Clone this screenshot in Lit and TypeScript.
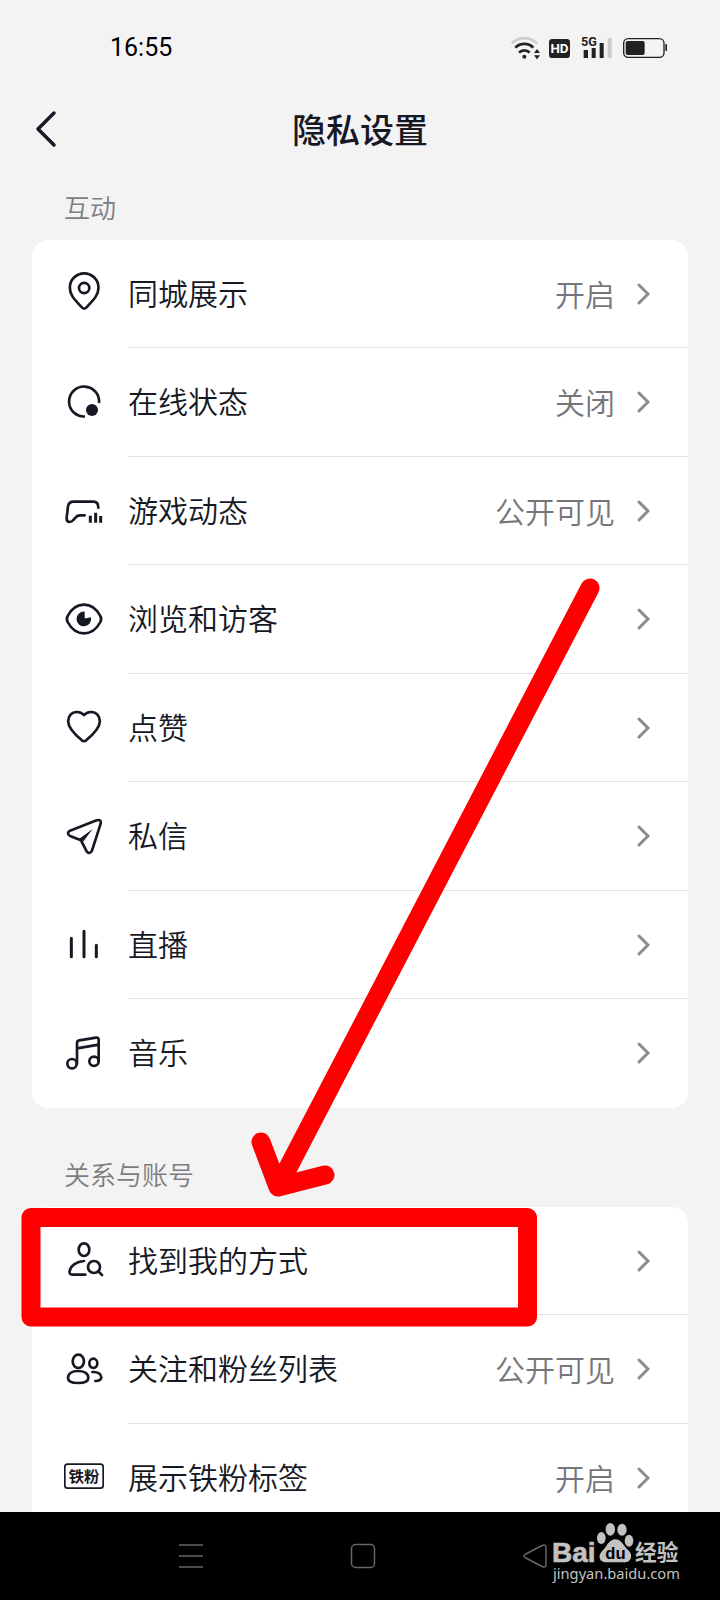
import { LitElement, html, svg, css, nothing } from "lit";
import type { SVGTemplateResult } from "lit";
import { customElement, property } from "lit/decorators.js";

interface Setting {
  icon: string;
  label: string;
  value?: string;
}

interface Group {
  title: string;
  items: Setting[];
}

const GROUPS: Group[] = [
  {
    title: "互动",
    items: [
      { icon: "pin", label: "同城展示", value: "开启" },
      { icon: "online", label: "在线状态", value: "关闭" },
      { icon: "game", label: "游戏动态", value: "公开可见" },
      { icon: "eye", label: "浏览和访客" },
      { icon: "heart", label: "点赞" },
      { icon: "plane", label: "私信" },
      { icon: "live", label: "直播" },
      { icon: "music", label: "音乐" },
    ],
  },
  {
    title: "关系与账号",
    items: [
      { icon: "find", label: "找到我的方式" },
      { icon: "friends", label: "关注和粉丝列表", value: "公开可见" },
      { icon: "badge", label: "展示铁粉标签", value: "开启" },
    ],
  },
];

// Icons share a 132-unit grid, three units to one pixel.
const ICONS: Record<string, SVGTemplateResult> = {
  pin: svg`
    <path d="M23.500 47a43 43 0 0 1 86 0c0 26-21 42-37 60q-6 6-12 0c-16-18-37-34-37-60z"/>
    <circle cx="66.500" cy="48" r="15.500"/>`,
  online: svg`
    <path stroke-linecap="butt" d="M111 66A45 45 0 1 0 69 106.500"/>
    <circle class="solid" cx="90" cy="87" r="18"/>`,
  game: svg`
    <path d="M109 56C109 44 105 38 94 38H35Q20 38 18 52L14 86Q13 98 23 99Q29 99 34 93L41 85Q46 79 54 79H68"/>
    <path class="bar" d="M85 80V101M101 71V101M116 81V101"/>`,
  eye: svg`
    <path d="M17 54C28 33 46 20 66 20s38 13 49 34q5 9 0 18C104 93 86 106 66 106S28 93 17 72q-5-9 0-18z"/>
    <path class="solid" d="M68 41v16q0 5 5 4l14-3a22 22 0 1 1-19-17z"/>`,
  heart: svg`
    <path d="M66 27C59 20 52 18 45 18 29 18 18.500 30 18.500 46c0 20 19 39 41 57q6.500 5 13 0c22-18 41-37 41-57C113.500 30 103 18 87 18c-7 0-14 2-21 9z"/>`,
  plane: svg`
    <path d="M24 47L104 16Q119 12 116 26L90 107Q83 120 74 109L57 76L24 63Q12 55 24 47z"/>
    <path class="solid" d="M52 71L92 42L62 82z"/>`,
  live: svg`<path class="bar round" d="M28 46V101M66 25V101M103 67V101"/>`,
  music: svg`
    <circle cx="30" cy="95" r="14"/>
    <circle cx="96" cy="88" r="14"/>
    <path d="M45 95V33Q45 26 52 25L102 17Q110 16 110 24V88M45 49L110 38"/>`,
  find: svg`
    <ellipse cx="66" cy="32" rx="16" ry="19"/>
    <path d="M66 66C44 68 26 79 23 96Q21 107 31 107H70"/>
    <circle cx="96" cy="84" r="18"/>
    <path d="M109 97L120 108"/>`,
  friends: svg`
    <ellipse cx="49" cy="40" rx="17" ry="20"/>
    <path d="M18 90C18 76 31 69 48 69s31 7 31 21c0 11-12 15-31 15s-30-4-30-15z"/>
    <ellipse cx="94" cy="46" rx="12" ry="14"/>
    <path d="M91 72C108 71 118 78 118 88Q118 99 100 99"/>`,
  badge: svg`
    <rect x="8.500" y="24.500" width="115" height="72" rx="8" stroke-width="5"/>
    <text x="66" y="78" text-anchor="middle">铁粉</text>`,
};

const FONT = css`"Noto Sans CJK SC", sans-serif`;

@customElement("settings-row")
export class SettingsRow extends LitElement {
  @property() icon = "";
  @property() label = "";
  @property() value?: string;

  static styles = css`
    :host {
      display: block;
    }
    .row {
      display: flex;
      gap: 22px;
      align-items: center;
      box-sizing: border-box;
      width: 100%;
      height: 100%;
      padding: 0 0 0 30px;
      border: 0;
      background: none;
      color: #161823;
      font: 350 30px/44px ${FONT};
      text-align: left;
      cursor: pointer;
    }
    .icon {
      flex: none;
      width: 44px;
      height: 44px;
      fill: none;
      stroke: #161823;
      stroke-width: 8;
      stroke-linejoin: round;
      stroke-linecap: round;
    }
    .icon .solid {
      fill: #161823;
      stroke: none;
    }
    .icon .bar {
      stroke-width: 9;
      stroke-linecap: butt;
    }
    .icon .round {
      stroke-linecap: round;
    }
    .icon text {
      fill: #161823;
      stroke: none;
      font: 700 46px ${FONT};
    }
    .body {
      display: flex;
      flex: 1;
      align-self: stretch;
      align-items: center;
      padding-right: 38px;
      border-bottom: 1px solid #e2e2e3;
    }
    :host([last]) .body {
      border-bottom-color: transparent;
    }
    .label {
      flex: 1;
      padding-bottom: 4px;
    }
    .value {
      padding-bottom: 2px;
      color: #75767b;
    }
    .chevron {
      width: 14px;
      height: 24px;
      margin-left: 21px;
      fill: none;
      stroke: #8a8b91;
      stroke-width: 3;
      stroke-linecap: round;
    }
  `;

  render() {
    return html`
      <button class="row" type="button">
        <svg class="icon" viewBox="0 0 132 132" aria-hidden="true">${ICONS[this.icon]}</svg>
        <span class="body">
          <span class="label">${this.label}</span>
          ${this.value ? html`<span class="value">${this.value}</span>` : nothing}
          <svg class="chevron" viewBox="0 0 14 24" aria-hidden="true">
            <path d="M3 3L12 12L3 21" />
          </svg>
        </span>
      </button>
    `;
  }
}

@customElement("app-root")
export class AppRoot extends LitElement {
  static styles = css`
    :host {
      display: flex;
      flex-direction: column;
      height: 100vh;
      background: #f3f3f3;
      color: #161823;
      font-family: ${FONT};
    }
    .status {
      display: flex;
      flex: none;
      align-items: center;
      justify-content: space-between;
      box-sizing: border-box;
      height: 96px;
      padding: 0 52px 0 110px;
    }
    .time {
      color: #000;
      font: 400 25px/32px Roboto, sans-serif;
    }
    .indicators {
      width: 160px;
      height: 30px;
      fill: #222;
    }
    .indicators text {
      font-family: "Liberation Sans Narrow", Roboto, sans-serif;
      font-weight: 700;
    }
    .indicators .hd {
      fill: #fff;
    }
    .indicators .line {
      fill: none;
      stroke: #222;
    }
    .indicators .dim {
      fill: #cbcbcb;
    }
    .indicators .dim-line {
      fill: none;
      stroke: #cbcbcb;
    }
    .header {
      display: grid;
      flex: none;
      grid-template-columns: 56px 1fr 56px;
      align-items: center;
      box-sizing: border-box;
      height: 68px;
      padding: 0 24px 2px;
    }
    .back {
      display: flex;
      padding: 8px;
      border: 0;
      background: none;
      cursor: pointer;
    }
    .back svg {
      width: 28px;
      height: 40px;
      fill: none;
      stroke: #161823;
      stroke-width: 3.500;
      stroke-linecap: round;
      stroke-linejoin: round;
    }
    .title {
      margin: 0;
      font-size: 34px;
      font-weight: 500;
      line-height: 48px;
      text-align: center;
    }
    .scroller {
      position: relative;
      flex: 1;
      min-height: 0;
      overflow-y: auto;
      scrollbar-width: none;
    }
    .groups {
      display: flex;
      flex-direction: column;
      gap: 48px;
      padding: 25px 32px 48px;
    }
    .group-title {
      margin: 0 0 15px;
      padding-left: 32px;
      color: #7d7e82;
      font-size: 26px;
      font-weight: 350;
      line-height: 36px;
    }
    .card {
      margin: 0;
      padding: 0;
      border-radius: 16px;
      background: #fff;
      list-style: none;
    }
    .item {
      display: grid;
      height: 108px;
    }
    .item:nth-child(even) {
      height: 109px;
    }
    .marks {
      position: absolute;
      top: 0;
      left: 0;
      width: 720px;
      height: 1348px;
      fill: none;
      stroke: #fe0000;
      stroke-width: 19;
      stroke-linecap: round;
      stroke-linejoin: round;
      pointer-events: none;
    }
    .nav {
      position: relative;
      display: flex;
      flex: none;
      justify-content: center;
      height: 88px;
      padding-left: 5px;
      background: #000;
    }
    .key {
      display: flex;
      align-items: center;
      justify-content: center;
      width: 172px;
      padding: 0;
      border: 0;
      background: none;
      cursor: pointer;
    }
    .key svg {
      width: 26px;
      height: 26px;
      fill: none;
      stroke: #666;
      stroke-width: 1.500;
      stroke-linejoin: round;
    }
    .watermark {
      position: absolute;
      top: 8px;
      right: 37px;
      width: 133px;
      height: 67px;
      fill: #c2c2c2;
      pointer-events: none;
    }
    .brand {
      stroke: #c2c2c2;
      stroke-width: 2;
      font: 700 84px "Liberation Sans", sans-serif;
    }
    .brand-du {
      fill: #000;
      font: 700 50px "Liberation Sans", sans-serif;
    }
    .brand-cn {
      font: 700 65px ${FONT};
    }
    .brand-url {
      font: 400 44px "Noto Sans", sans-serif;
    }
  `;

  render() {
    return html`
      <div class="status">
        <span class="time">16:55</span>
        <svg class="indicators" viewBox="0 0 480 90" aria-hidden="true">
          <path class="dim-line" stroke-width="7" d="M11 31A55 55 0 0 1 87 31" />
          <path class="line" stroke-width="8" d="M22 44A38 38 0 0 1 76 44M33 59A22 22 0 0 1 65 59" />
          <circle cx="49" cy="71" r="6" />
          <path d="M87 48l9 12H78zM87 79l9-12H78z" />
          <rect x="123" y="18" width="63" height="57" rx="10" />
          <text class="hd" x="154.500" y="61" font-size="40" text-anchor="middle">HD</text>
          <text x="219" y="39" font-size="38">5G</text>
          <path d="M227 51h13v24h-13zM251 45h12v30h-12zM275 30h12v45h-12z" />
          <path class="dim" d="M299 15h12v60h-12z" />
          <rect class="line" stroke-width="4" x="347" y="17" width="121" height="56" rx="14" />
          <rect x="353" y="24" width="57" height="42" rx="6" />
          <rect x="472" y="33" width="5" height="21" rx="2" />
        </svg>
      </div>
      <header class="header">
        <button class="back" type="button" aria-label="返回">
          <svg viewBox="0 0 28 40"><path d="M22 4L6 20L22 36" /></svg>
        </button>
        <h1 class="title">隐私设置</h1>
      </header>
      <main class="scroller">
        <div class="groups">
          ${GROUPS.map(
            (group) => html`
              <section>
                <h2 class="group-title">${group.title}</h2>
                <ul class="card">
                  ${group.items.map(
                    (item, i) => html`
                      <li class="item">
                        <settings-row
                          .icon=${item.icon}
                          .label=${item.label}
                          .value=${item.value}
                          ?last=${i === group.items.length - 1}
                        ></settings-row>
                      </li>
                    `
                  )}
                </ul>
              </section>
            `
          )}
        </div>
        <svg class="marks" viewBox="0 164 720 1348" aria-hidden="true">
          <path d="M590 588L278 1187M261 1142L278 1187L325 1175" />
          <rect x="31" y="1217.500" width="496.500" height="99.500" />
        </svg>
      </main>
      <nav class="nav">
        <button class="key" type="button" aria-label="菜单">
          <svg viewBox="0 0 26 26"><path d="M1 2H25M1 13H25M1 24H25" /></svg>
        </button>
        <button class="key" type="button" aria-label="主页">
          <svg viewBox="0 0 26 26"><rect x="1.500" y="1.500" width="23" height="23" rx="4" /></svg>
        </button>
        <button class="key" type="button" aria-label="返回上一页">
          <svg viewBox="0 0 26 26"><path d="M3 11.500L20 2.500Q24 1 24 4V22Q24 25 20 23.500L3 14.500Q1 13 3 11.500z" /></svg>
        </button>
        <svg class="watermark" viewBox="0 0 399 201">
          <text class="brand" x="6" y="125">Bai</text>
          <ellipse cx="154" cy="54" rx="13" ry="18" />
          <ellipse cx="181" cy="28" rx="14" ry="19" />
          <ellipse cx="216" cy="29" rx="14" ry="18" />
          <ellipse cx="237" cy="62" rx="13" ry="18" />
          <path d="M196 58c16 0 22 14 34 28c10 8 15 16 13 26c-2 12-12 16-24 15h-46c-14 0-22-4-24-14c-2-12 6-18 14-27c10-12 16-28 33-28z" />
          <text class="brand-du" x="166" y="118">du</text>
          <text class="brand-cn" x="255" y="121">经验</text>
          <text class="brand-url" x="9" y="178">jingyan.baidu.com</text>
        </svg>
      </nav>
    `;
  }
}
